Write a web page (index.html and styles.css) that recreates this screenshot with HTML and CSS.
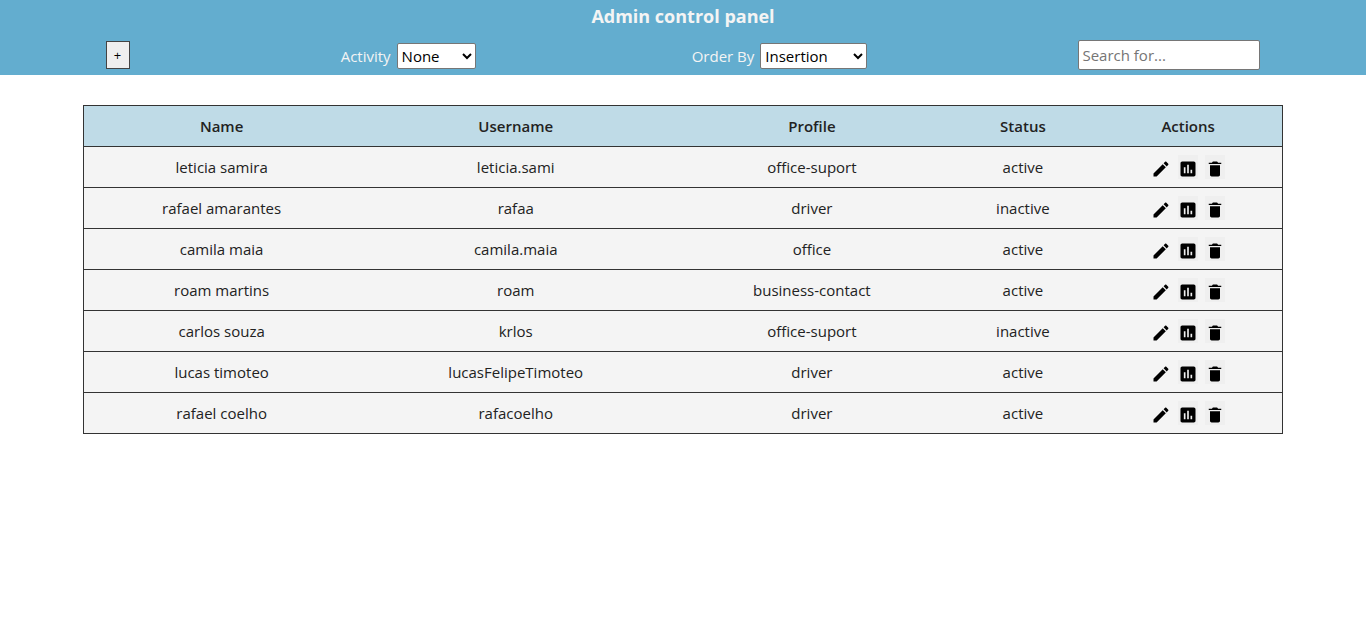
FILE: index.html
```html
<!DOCTYPE html>
<html lang="en">
<head>
<meta charset="utf-8">
<title>Admin control panel</title>
<link rel="stylesheet" href="styles.css">
</head>
<body>
<svg class="sprite" aria-hidden="true">
  <symbol id="edit" viewBox="0 0 512 512"><path d="M64 368v80h80l235.727-235.729-79.999-79.998L64 368zm377.602-217.602c8.531-8.531 8.531-21.334 0-29.865l-50.135-50.135c-8.531-8.531-21.334-8.531-29.865 0l-39.468 39.469 79.999 79.998 39.469-39.467z"/></symbol>
  <symbol id="chart" viewBox="0 0 24 24"><path d="M19 3H5c-1.100 0-2 .9-2 2v14c0 1.100.9 2 2 2h14c1.100 0 2-.9 2-2V5c0-1.100-.9-2-2-2zM9 17H7v-7h2v7zm4 0h-2V7h2v10zm4 0h-2v-4h2v4z"/></symbol>
  <symbol id="trash" viewBox="0 0 512 512"><path d="M128 405.429C128 428.846 147.198 448 170.667 448h170.667C364.802 448 384 428.846 384 405.429V160H128v245.429zM416 96h-80l-26.785-32H202.786L176 96H96v32h320V96z"/></symbol>
</svg>
<header class="topbar">
  <h1 class="title">Admin control panel</h1>
  <div class="controls">
    <button class="add" type="button" aria-label="Add user">+</button>
    <div class="field">
      <label for="activity">Activity</label>
      <select class="select select-activity" id="activity"><option>None</option><option>Active</option><option>Inactive</option></select>
    </div>
    <div class="field field-order">
      <label for="order">Order By</label>
      <select class="select select-order" id="order"><option>Insertion</option><option>Name</option><option>Username</option></select>
    </div>
    <input class="search" type="text" placeholder="Search for..." aria-label="Search">
  </div>
</header>
<main class="content">
  <table class="users">
    <colgroup><col class="col-name"><col class="col-username"><col class="col-profile"><col class="col-status"><col class="col-actions"></colgroup>
    <thead>
      <tr><th>Name</th><th>Username</th><th>Profile</th><th>Status</th><th>Actions</th></tr>
    </thead>
    <tbody>
      <tr><td>leticia samira</td><td>leticia.sami</td><td>office-suport</td><td>active</td><td><div class="actions"><a class="action" href="#edit-1" aria-label="Edit"><svg><use href="#edit"/></svg></a><button class="action" type="button" aria-label="Report"><svg><use href="#chart"/></svg></button><button class="action" type="button" aria-label="Delete"><svg><use href="#trash"/></svg></button></div></td></tr>
      <tr><td>rafael amarantes</td><td>rafaa</td><td>driver</td><td>inactive</td><td><div class="actions"><a class="action" href="#edit-2" aria-label="Edit"><svg><use href="#edit"/></svg></a><button class="action" type="button" aria-label="Report"><svg><use href="#chart"/></svg></button><button class="action" type="button" aria-label="Delete"><svg><use href="#trash"/></svg></button></div></td></tr>
      <tr><td>camila maia</td><td>camila.maia</td><td>office</td><td>active</td><td><div class="actions"><a class="action" href="#edit-3" aria-label="Edit"><svg><use href="#edit"/></svg></a><button class="action" type="button" aria-label="Report"><svg><use href="#chart"/></svg></button><button class="action" type="button" aria-label="Delete"><svg><use href="#trash"/></svg></button></div></td></tr>
      <tr><td>roam martins</td><td>roam</td><td>business-contact</td><td>active</td><td><div class="actions"><a class="action" href="#edit-4" aria-label="Edit"><svg><use href="#edit"/></svg></a><button class="action" type="button" aria-label="Report"><svg><use href="#chart"/></svg></button><button class="action" type="button" aria-label="Delete"><svg><use href="#trash"/></svg></button></div></td></tr>
      <tr><td>carlos souza</td><td>krlos</td><td>office-suport</td><td>inactive</td><td><div class="actions"><a class="action" href="#edit-5" aria-label="Edit"><svg><use href="#edit"/></svg></a><button class="action" type="button" aria-label="Report"><svg><use href="#chart"/></svg></button><button class="action" type="button" aria-label="Delete"><svg><use href="#trash"/></svg></button></div></td></tr>
      <tr><td>lucas timoteo</td><td>lucasFelipeTimoteo</td><td>driver</td><td>active</td><td><div class="actions"><a class="action" href="#edit-6" aria-label="Edit"><svg><use href="#edit"/></svg></a><button class="action" type="button" aria-label="Report"><svg><use href="#chart"/></svg></button><button class="action" type="button" aria-label="Delete"><svg><use href="#trash"/></svg></button></div></td></tr>
      <tr><td>rafael coelho</td><td>rafacoelho</td><td>driver</td><td>active</td><td><div class="actions"><a class="action" href="#edit-7" aria-label="Edit"><svg><use href="#edit"/></svg></a><button class="action" type="button" aria-label="Report"><svg><use href="#chart"/></svg></button><button class="action" type="button" aria-label="Delete"><svg><use href="#trash"/></svg></button></div></td></tr>
    </tbody>
  </table>
</main>
</body>
</html>
```
FILE: styles.css
```css
* { box-sizing: border-box; }
body {
  margin: 0;
  background: #fff;
  color: #222;
  font: 15px/24px "Segoe UI", "Open Sans", "Noto Sans", sans-serif;
}
.sprite { display: none; }
.topbar { padding-bottom: 5px; background: #63adcf; color: #f4f4f4; }
.title { margin: 0; font-size: 18px; line-height: 32px; font-weight: 700; text-align: center; }
.controls { display: flex; justify-content: space-around; align-items: center; padding-top: 8px; }
.add {
  width: 24px;
  height: 28px;
  padding: 0;
  border: 1px solid #444;
  background: #efefef;
  color: #000;
  font: 13px/20px "Segoe UI", "Open Sans", sans-serif;
}
.field { display: flex; align-items: center; gap: 6px; padding-top: 2px; }
.field-order { padding-left: 5px; }
.select {
  height: 26px;
  padding: 0;
  border: 1px solid #767676;
  border-radius: 2px;
  background: #fff;
  color: #000;
  font: inherit;
}
.select-activity { width: 79px; }
.select-order { width: 107px; }
.search {
  width: 182px;
  height: 30px;
  padding: 1px 3px;
  border: 1px solid #767676;
  border-radius: 2px;
  background: #fff;
  font: inherit;
}
.search::placeholder { color: #757575; }
.content { max-width: 1200px; margin: 30px auto 0; }
.users {
  width: 100%;
  table-layout: fixed;
  border: 1px solid #333;
  border-collapse: collapse;
  background: #f4f4f4;
}
.col-name { width: 23%; }
.col-username { width: 26.1%; }
.col-profile { width: 23.3%; }
.col-status { width: 11.9%; }
.col-actions { width: 15.7%; }
.users tr { height: 41px; border-bottom: 1px solid #333; }
.users thead { background: #bfdbe7; }
.users th, .users td { padding: 0; text-align: center; vertical-align: middle; }
.users th { font-weight: 600; }
.actions { display: flex; justify-content: center; gap: 7px; }
.action { display: flex; align-items: center; width: 20px; height: 24px; padding: 4px 0 0; border: 0; color: #000; }
button.action { background: #efefef; }
.action svg { width: 20px; height: 20px; fill: currentColor; }
```
